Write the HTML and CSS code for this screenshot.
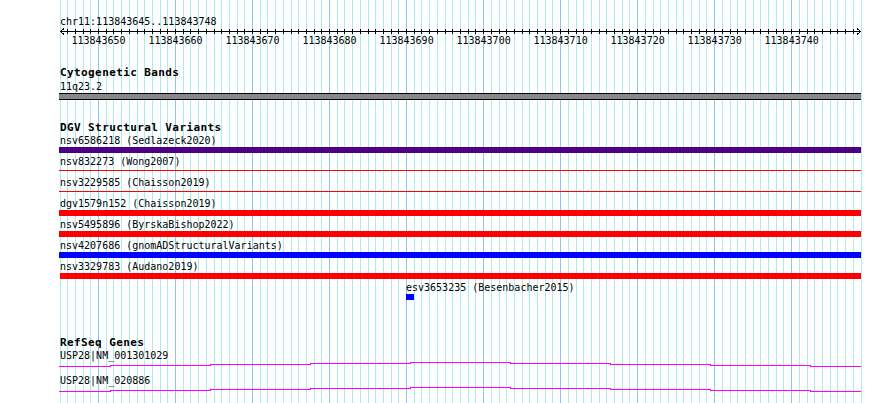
FILE: index.html
```html
<!DOCTYPE html>
<html>
<head>
    <title>chr11:113843645..113843748</title>
    <link rel="stylesheet" href="styles.css">
</head>
<body>
    <div class="browser">
        <svg class="grid" id="grid" width="890" height="403"></svg>
        <div class="tracks">
            <div class="position">chr11:113843645..113843748</div>
            <svg class="axis" id="axis" width="803" height="7"></svg>
            <div class="tick-labels">
                <span>113843650</span>
                <span>113843660</span>
                <span>113843670</span>
                <span>113843680</span>
                <span>113843690</span>
                <span>113843700</span>
                <span>113843710</span>
                <span>113843720</span>
                <span>113843730</span>
                <span>113843740</span>
            </div>

            <div class="track bands">
                <div class="track-title">Cytogenetic Bands</div>
                <div class="band-label">11q23.2</div>
                <div class="band"></div>
            </div>

            <div class="track dgv">
                <div class="track-title">DGV Structural Variants</div>
                <div class="feature">
                    <div class="label">nsv6586218 (Sedlazeck2020)</div>
                    <div class="bar purple"></div>
                </div>
                <div class="feature">
                    <div class="label">nsv832273 (Wong2007)</div>
                    <div class="bar thin red"></div>
                </div>
                <div class="feature">
                    <div class="label">nsv3229585 (Chaisson2019)</div>
                    <div class="bar thin red"></div>
                </div>
                <div class="feature">
                    <div class="label">dgv1579n152 (Chaisson2019)</div>
                    <div class="bar red"></div>
                </div>
                <div class="feature">
                    <div class="label">nsv5495896 (ByrskaBishop2022)</div>
                    <div class="bar red"></div>
                </div>
                <div class="feature">
                    <div class="label">nsv4207686 (gnomADStructuralVariants)</div>
                    <div class="bar blue"></div>
                </div>
                <div class="feature">
                    <div class="label">nsv3329783 (Audano2019)</div>
                    <div class="bar red inset"></div>
                </div>
                <div class="feature esv">
                    <div class="label">esv3653235 (Besenbacher2015)</div>
                    <div class="bar blue"></div>
                </div>
            </div>

            <div class="track refseq">
                <div class="track-title">RefSeq Genes</div>
                <div class="transcript">
                    <div class="label">USP28|NM_001301029</div>
                    <svg class="gene-line" width="802" height="5">
                        <path d="M0 4.5H51V3.5H151V2.5H251V1.5H351V0.5H451V1.5H551V2.5H651V3.5H751V4.5H802"/>
                    </svg>
                </div>
                <div class="transcript">
                    <div class="label">USP28|NM_020886</div>
                    <svg class="gene-line" width="802" height="5">
                        <path d="M0 4.5H51V3.5H151V2.5H251V1.5H351V0.5H451V1.5H551V2.5H651V3.5H751V4.5H802"/>
                    </svg>
                </div>
            </div>
        </div>
    </div>
    <script>
        // one guideline and one ruler tick per base, 104 bases over 801px
        const NS = 'http://www.w3.org/2000/svg';
        const BASES = 104;
        const STEP = 801 / BASES;

        const grid = document.getElementById('grid');
        const axis = document.getElementById('axis');

        function addLine(svg, x1, y1, x2, y2, cls) {
            const line = document.createElementNS(NS, 'line');
            line.setAttribute('x1', x1);
            line.setAttribute('y1', y1);
            line.setAttribute('x2', x2);
            line.setAttribute('y2', y2);
            if (cls) line.setAttribute('class', cls);
            svg.appendChild(line);
        }

        for (let k = 0; k <= BASES; k++) {
            const x = Math.floor(60 + k * STEP);
            addLine(grid, x + 0.5, 0, x + 0.5, 403, k % 10 === 5 ? 'major' : '');
            if (k > 0 && k < BASES) {
                addLine(axis, x - 59 + 0.5, 1, x - 59 + 0.5, 6);
            }
        }

        addLine(axis, 1, 3.5, 802, 3.5);
        const arrows = document.createElementNS(NS, 'path');
        arrows.setAttribute('d', 'M5 0.5L1.5 3.5L5 6.5M798 0.5L801.5 3.5L798 6.5');
        axis.appendChild(arrows);
    </script>
</body>
</html>
```

FILE: styles.css
```css
body {
    margin: 0;
    background-color: #fff;
    color: #000;
    font-family: "DejaVu Sans Mono", "Liberation Mono", monospace;
    font-size: 10px;
    line-height: 11px;
}
.browser {
    position: relative;
    z-index: 0;
    height: 403px;
    padding-top: 16px;
    box-sizing: border-box;
    overflow: hidden;
}
.grid {
    position: absolute;
    top: 0;
    left: 0;
    z-index: -1;
    shape-rendering: crispEdges;
}
.grid line {
    stroke: #aaecf0;
    stroke-width: 1;
}
.grid line.major {
    stroke: #86caf0;
}
.tracks {
    margin-left: 59px;
    width: 802px;
}
.position {
    height: 10px;
    padding-left: 1px;
    white-space: nowrap;
}
.axis {
    display: block;
    margin-top: 2px;
    shape-rendering: crispEdges;
}
.axis line, .axis path {
    stroke: #000;
    stroke-width: 1;
    fill: none;
}
.tick-labels {
    display: flex;
    height: 10px;
    padding-left: 1px;
}
.tick-labels span {
    flex: none;
    width: 77.02px;
    text-align: center;
}
.track-title {
    height: 13px;
    padding-left: 1px;
    font-weight: bold;
    font-size: 11px;
    letter-spacing: 0.4px;
    line-height: 12px;
    white-space: nowrap;
}
.bands {
    margin-top: 22px;
}
.band-label {
    height: 10px;
    margin-top: 1px;
    padding-left: 1px;
}
.band {
    height: 5px;
    margin-top: 2px;
    background-color: #888;
    border-top: 1px solid #000;
    border-bottom: 1px solid #000;
}
.dgv {
    margin-top: 22px;
}
.feature {
    height: 21px;
}
.label {
    height: 12px;
    padding-left: 1px;
    white-space: nowrap;
}
.bar {
    height: 6px;
}
.bar.thin {
    height: 1px;
    margin-top: 2px;
}
.bar.inset {
    margin-left: 1px;
}
.purple {
    background-color: #4b0082;
}
.red {
    background-color: #ff0000;
}
.blue {
    background-color: #0000ff;
}
.esv {
    height: 18px;
}
.esv .label {
    padding-left: 347px;
}
.esv .bar {
    width: 8px;
    margin-left: 347px;
}
.refseq {
    margin-top: 37px;
}
.transcript {
    height: 25px;
}
.gene-line {
    display: block;
    shape-rendering: crispEdges;
}
.gene-line path {
    stroke: #ff00ff;
    stroke-width: 1;
    fill: none;
}
```
